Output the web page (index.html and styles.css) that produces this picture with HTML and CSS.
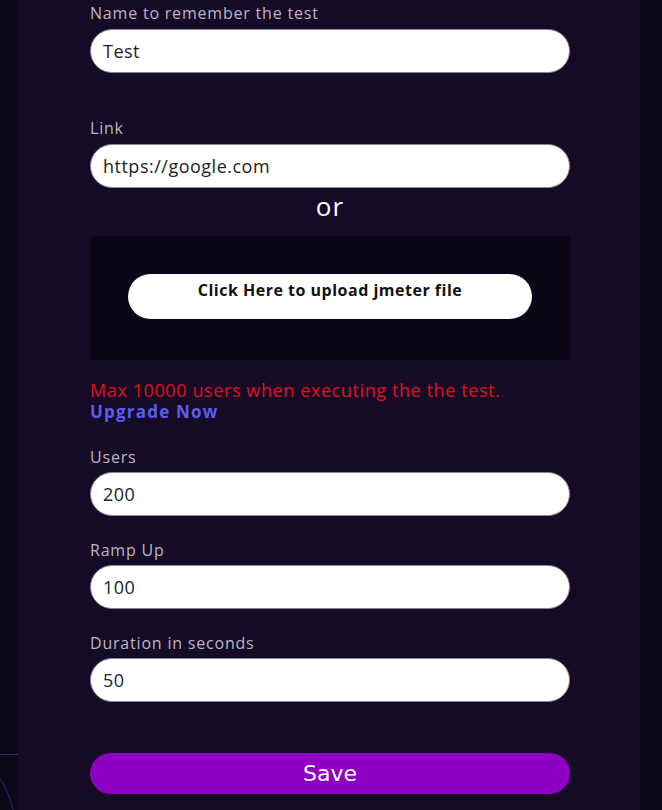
FILE: index.html
```html
<!DOCTYPE html>
<html>
<head>
<meta charset="utf-8">
<link rel="stylesheet" href="styles.css">
</head>
<body>
<div class="side"><div class="line"></div><div class="curve"></div></div>
<div class="panel">
  <form class="form">
    <label class="label">Name to remember the test</label>
    <input class="input" type="text" value="Test">
    <label class="label label-gap">Link</label>
    <input class="input" type="text" value="https://google.com">
    <div class="or">or</div>
    <div class="upload-box">
      <button type="button" class="upload-btn">Click Here to upload jmeter file</button>
    </div>
    <div class="warn">Max 10000 users when executing the the test.</div>
    <a class="upgrade">Upgrade Now</a>
    <label class="label label-small">Users</label>
    <input class="input" type="text" value="200">
    <label class="label label-small">Ramp Up</label>
    <input class="input" type="text" value="100">
    <label class="label label-small">Duration in seconds</label>
    <input class="input" type="text" value="50">
    <button type="button" class="save">Save</button>
  </form>
</div>
</body>
</html>
```
FILE: styles.css
```css
html, body {
  margin: 0;
  padding: 0;
  background: #0c0818;
  height: 810px;
  overflow: hidden;
  font-family: "Open Sans", "Noto Sans", sans-serif;
}
body {
  display: flex;
}
.side {
  width: 18px;
  position: relative;
  flex: none;
}
.line {
  position: absolute;
  left: 0;
  top: 754px;
  width: 18px;
  height: 1px;
  background: #2a2f7a;
}
.curve {
  position: absolute;
  left: -30px;
  top: 760px;
  width: 46px;
  height: 80px;
  border-top-right-radius: 46px 80px;
  border-top: 1px solid #242866;
  border-right: 1px solid #242866;
}
.panel {
  width: 622px;
  height: 810px;
  background: #160b26;
  flex: none;
}
.form {
  width: 480px;
  margin-left: 72px;
  padding-top: 3px;
  display: flex;
  flex-direction: column;
}
.label {
  font-size: 16px;
  line-height: 20px;
  letter-spacing: 0.8px;
  color: #bdb5c6;
  margin-bottom: 6px;
}
.label-gap {
  margin-top: 45px;
  margin-bottom: 6px;
}
.label-small {
  margin-top: 24px;
  margin-bottom: 5px;
}
.input {
  box-sizing: border-box;
  height: 44px;
  width: 480px;
  border: 1px solid #8a8790;
  border-radius: 22px;
  background: #fff;
  padding: 0 12px;
  font-family: inherit;
  font-size: 18px;
  letter-spacing: 0.5px;
  color: #222;
  outline: none;
}
.or {
  text-align: center;
  font-size: 26px;
  line-height: 30px;
  letter-spacing: 1px;
  color: #fff;
  margin-top: 3px;
}
.upload-box {
  margin-top: 15px;
  height: 124px;
  box-sizing: border-box;
  background: #0c0716;
  border-radius: 4px;
  padding: 38px 38px 0;
  width: 481px;
}
.upload-btn {
  width: 404px;
  height: 45px;
  border: none;
  border-radius: 23px;
  background: #fff;
  font-family: inherit;
  font-weight: 700;
  font-size: 16px;
  letter-spacing: 0.5px;
  color: #111;
  padding: 0 0 14px;
  display: block;
}
.warn {
  margin-top: 19px;
  font-size: 18px;
  line-height: 22px;
  letter-spacing: 0.6px;
  color: #e0101c;
}
.upgrade {
  font-size: 17px;
  line-height: 22px;
  font-weight: 700;
  letter-spacing: 1.2px;
  color: #5c5cf2;
}
.upgrade + .label-small {
  margin-top: 24px;
}
.save {
  margin-top: 51px;
  height: 41px;
  width: 480px;
  border: none;
  border-radius: 21px;
  background: #8e00c2;
  color: #fff;
  font-family: "DejaVu Sans", sans-serif;
  font-size: 22px;
  padding: 0;
}
```
